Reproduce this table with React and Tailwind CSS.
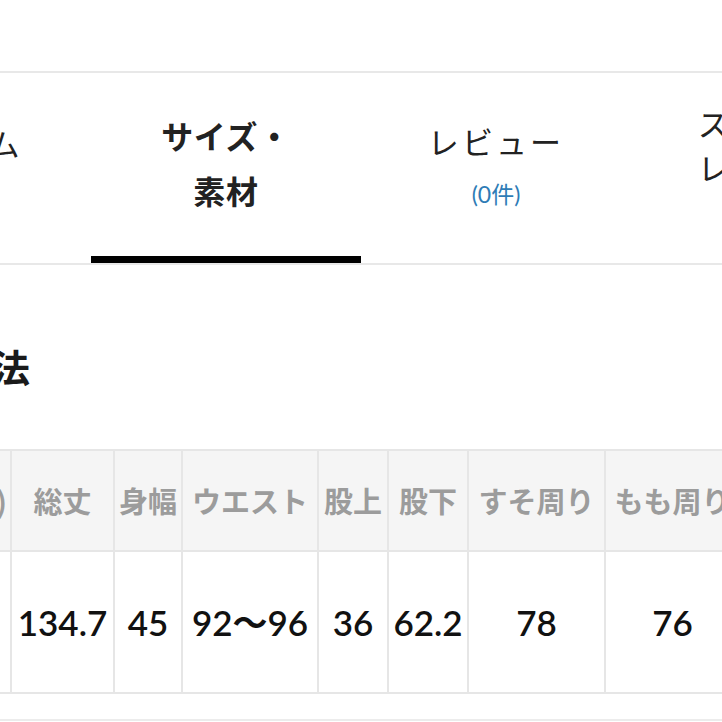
import React from 'react';

const jp = "font-['Noto_Sans_CJK_JP','Noto_Sans',sans-serif]";

const tabs = [
  { key: 'item', lines: ['アイテム', '詳細'], pad: 'pb-[6px]' },
  { key: 'size', lines: ['サイズ・', '素材'], active: true },
  { key: 'review', lines: ['レビュー'], count: '(0件)', pad: 'pb-[8px]', gap: 'mt-[16px]' },
  { key: 'staff', lines: ['スタッフ', 'レビュー'], count: '(0件)', pad: 'pb-[6px]', gap: 'mt-[10px]' },
];

const columns = [
  { label: '(cm)', value: 'F', w: 'w-[100px]', align: 'text-right pr-[3px]' },
  { label: '総丈', value: '134.7', w: 'w-[103px]' },
  { label: '身幅', value: '45', w: 'w-[68px]' },
  { label: 'ウエスト', value: '92〜96', w: 'w-[136px]' },
  { label: '股上', value: '36', w: 'w-[70px]' },
  { label: '股下', value: '62.2', w: 'w-[80px]' },
  { label: 'すそ周り', value: '78', w: 'w-[137px]' },
  { label: 'もも周り', value: '76', w: 'w-[135px]' },
];

function Tab({ tab }) {
  if (tab.active) {
    return (
      <div className="w-[270px] h-[190px] shrink-0 -mb-[2px] border-b-[7px] border-black flex flex-col items-center justify-center pb-[4px]">
        {tab.lines.map((l) => (
          <div key={l} className="text-[32px] leading-[55px] font-bold text-[#222] tracking-[0.02em]">{l}</div>
        ))}
      </div>
    );
  }
  return (
    <div className={`w-[270px] h-[190px] shrink-0 flex flex-col items-center justify-center ${tab.pad}`}>
      {tab.lines.map((l) => (
        <div key={l} className="text-[31px] leading-[44px] text-[#222] tracking-[0.1em]">{l}</div>
      ))}
      {tab.count && (
        <div className={`text-[23px] leading-[30px] ${tab.gap} text-[#2e7cb6] font-['Lato','Noto_Sans_CJK_JP',sans-serif]`}>{tab.count}</div>
      )}
    </div>
  );
}

export default function App() {
  return (
    <div className={`w-[722px] h-[722px] overflow-hidden bg-white ${jp}`}>
      <div className="h-[71px]" />

      <div className="flex w-max -ml-[179px] border-y-2 border-[#e8e8e8]">
        {tabs.map((t) => (
          <Tab key={t.key} tab={t} />
        ))}
      </div>

      <h2 className="mt-[81px] -ml-[46px] text-[38px] leading-[40px] font-bold text-[#1a1a1a]">寸法</h2>

      <table className="mt-[63px] -ml-[90px] w-[829px] border-collapse table-fixed">
        <thead>
          <tr className="h-[101px]">
            {columns.map((c) => (
              <th key={c.label} className={`${c.w} ${c.align || 'text-center px-0'} border-2 border-[#e6e6e6] bg-[#f5f5f5] text-[29px] font-bold text-[#9c9c9c] whitespace-nowrap`}>
                {c.label}
              </th>
            ))}
          </tr>
        </thead>
        <tbody>
          <tr className="h-[142px]">
            {columns.map((c) => (
              <td key={c.label} className="border-2 border-[#e6e6e6] text-center text-[35px] font-semibold text-[#111] whitespace-nowrap font-['Lato','Noto_Sans_CJK_JP',sans-serif]">
                {c.value}
              </td>
            ))}
          </tr>
        </tbody>
      </table>

      <div className="mt-[25px] border-t-2 border-[#ececec]" />
    </div>
  );
}
